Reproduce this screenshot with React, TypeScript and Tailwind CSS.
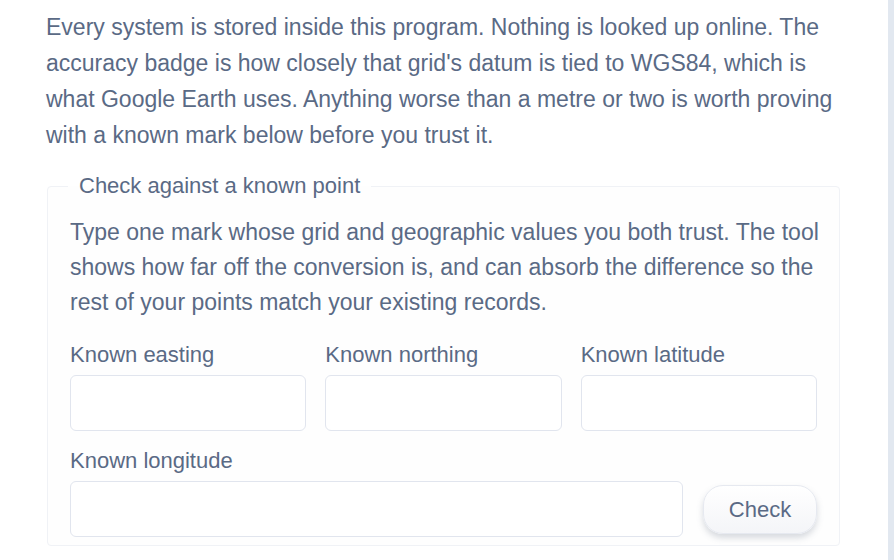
const fields = ['Known easting', 'Known northing', 'Known latitude']

function Field({ label }: { label: string }) {
  return (
    <label className="flex flex-col">
      <span className="text-[22px] leading-[28px]">{label}</span>
      <input
        type="text"
        className="mt-[6px] h-[56px] w-full rounded-[6px] border border-[#e1e5ee] bg-white px-3 outline-none"
      />
    </label>
  )
}

export default function App() {
  return (
    <div
      className="flex min-h-[560px] bg-white text-[#5a6a85]"
      style={{ fontFamily: '"Liberation Sans", Arial, sans-serif' }}
    >
      <div className="flex-1 pl-[46px] pr-[48px] pt-[9px]">
        <p className="text-[23px] leading-[36px]">
          Every system is stored inside this program. Nothing is looked up online. The
          accuracy badge is how closely that grid's datum is tied to WGS84, which is
          what Google Earth uses. Anything worse than a metre or two is worth proving
          with a known mark below before you trust it.
        </p>

        <fieldset className="mt-[19px] ml-px rounded-[4px] border border-[#f0f2f6] bg-[#fefefe] px-[22px] pt-[15px] pb-[8px]">
          <legend className="-ml-[2px] px-[11px] text-[22px] leading-[28px]">
            Check against a known point
          </legend>

          <p className="-mr-[6px] text-[23px] leading-[35px]">
            Type one mark whose grid and geographic values you both trust. The tool
            shows how far off the conversion is, and can absorb the difference so the
            rest of your points match your existing records.
          </p>

          <div className="mt-[21px] grid grid-cols-3 gap-[19px]">
            {fields.map((f) => (
              <Field key={f} label={f} />
            ))}
          </div>

          <div className="mt-[16px] flex flex-col">
            <span className="text-[22px] leading-[28px]">Known longitude</span>
            <div className="mt-[6px] flex items-center gap-[20px]">
              <input
                type="text"
                className="h-[56px] flex-1 rounded-[6px] border border-[#e1e5ee] bg-white px-3 outline-none"
              />
              <button className="h-[49px] w-[114px] rounded-[20px] border border-[#e6e9f0] bg-gradient-to-b from-white to-[#f4f5f8] text-[22px] text-[#5a6a85] shadow-[0_4px_6px_rgba(100,110,130,0.25)]">
                Check
              </button>
            </div>
          </div>
        </fieldset>
      </div>
      <div className="w-[6px] bg-[#e2e8f0]" />
    </div>
  )
}
